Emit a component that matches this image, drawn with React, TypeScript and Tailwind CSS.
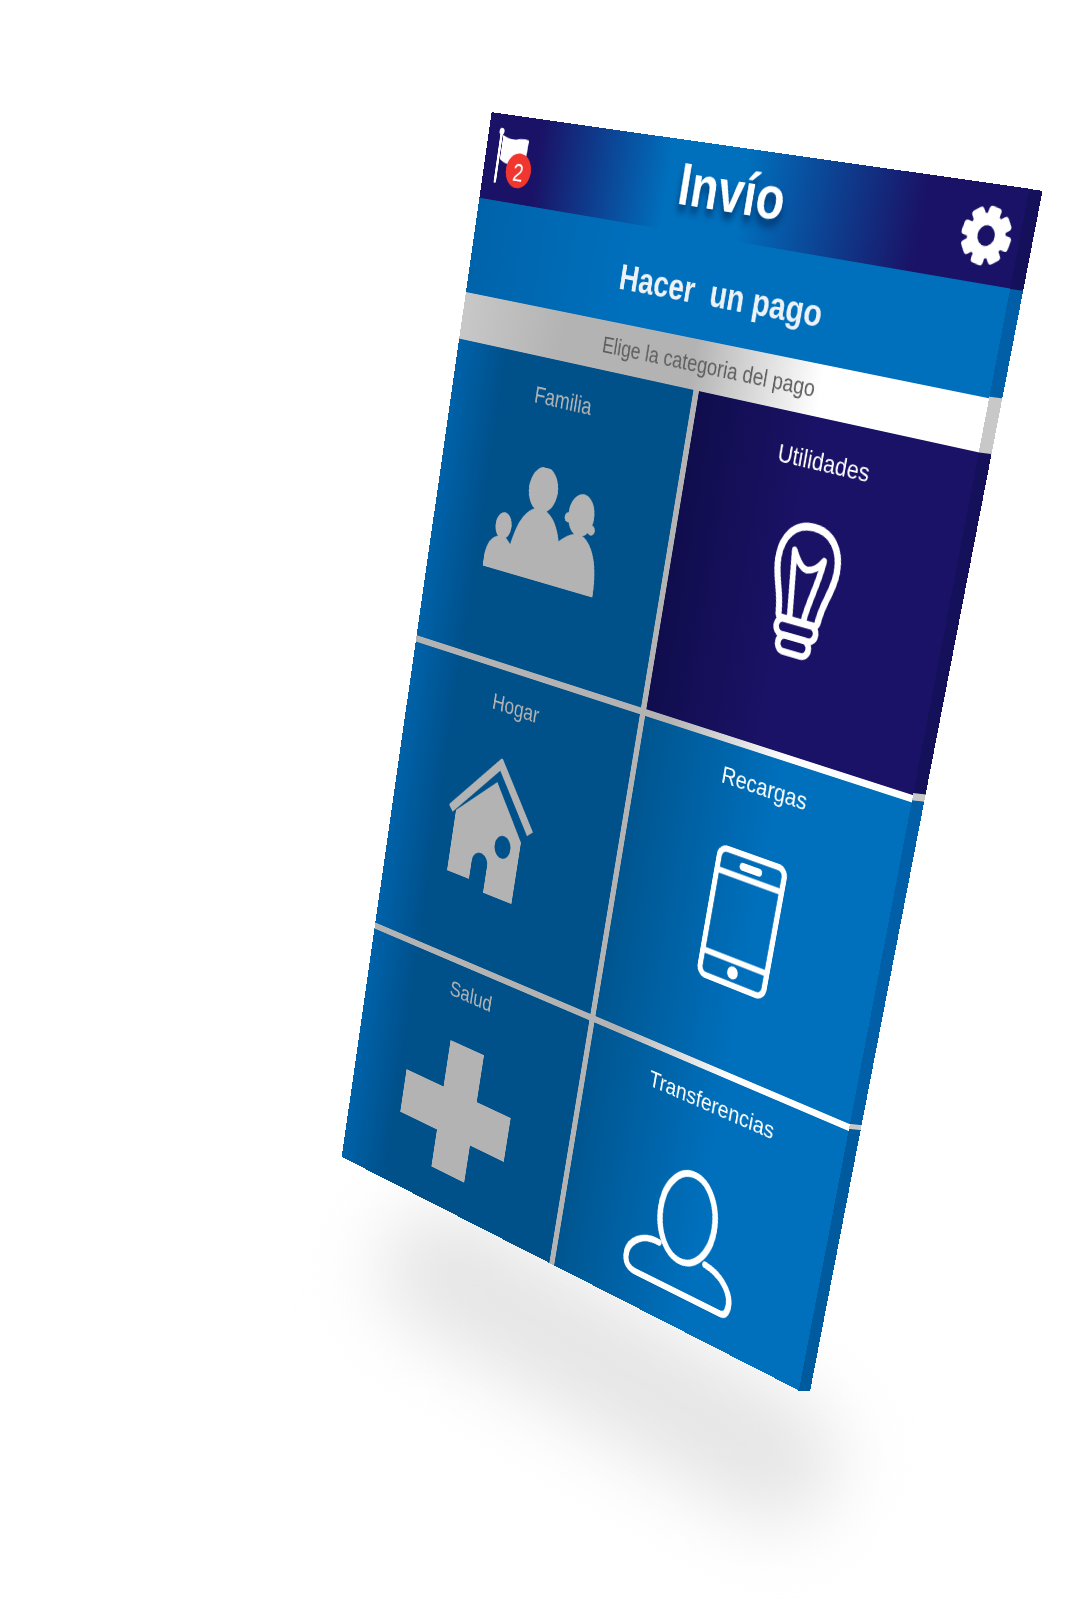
import type { ReactNode } from "react";

type Pt = [number, number];

// maps a w x h box onto four screen corners (tl, tr, br, bl)
function quadMatrix(w: number, h: number, [p0, p1, p2, p3]: Pt[]) {
  const dx1 = p1[0] - p2[0];
  const dy1 = p1[1] - p2[1];
  const dx2 = p3[0] - p2[0];
  const dy2 = p3[1] - p2[1];
  const sx = p0[0] - p1[0] + p2[0] - p3[0];
  const sy = p0[1] - p1[1] + p2[1] - p3[1];
  const det = dx1 * dy2 - dx2 * dy1;
  const g = (sx * dy2 - dx2 * sy) / det;
  const k = (dx1 * sy - sx * dy1) / det;
  const a = p1[0] - p0[0] + g * p1[0];
  const b = p3[0] - p0[0] + k * p3[0];
  const d = p1[1] - p0[1] + g * p1[1];
  const e = p3[1] - p0[1] + k * p3[1];
  return `matrix3d(${a / w},${d / w},0,${g / w},${b / h},${e / h},0,${k / h},0,0,1,0,${p0[0]},${p0[1]},0,1)`;
}

const FACE: Pt[] = [[491.7, 112.2], [1029.3, 188.7], [798.8, 1390.4], [341.7, 1156.8]];
const SIDE: Pt[] = [[1027.8, 188.7], [1042.5, 190.8], [810, 1391.4], [797.3, 1390.4]];

const FONT = "font-['Liberation_Sans',Arial,sans-serif]";

function Cell({ label, className, labelClass, pad, children }: { label: string; className: string; labelClass: string; pad: string; children: ReactNode }) {
  return (
    <div className={`flex flex-col items-center ${pad} ${className}`}>
      <span className={`text-[14px] leading-4 ${labelClass}`}>{label}</span>
      {children}
    </div>
  );
}

function Gear() {
  return (
    <svg viewBox="0 0 32 32" className="absolute left-[339px] top-[10px] h-8 w-8">
      <g fill="#fff">
        <circle cx="16" cy="16" r="11.5" />
        {[0, 45, 90, 135, 180, 225, 270, 315].map((r) => (
          <rect key={r} x="12.2" y="1" width="7.6" height="8" rx="1.8" transform={`rotate(${r + 12} 16 16)`} />
        ))}
      </g>
      <circle cx="16" cy="16" r="5.2" fill="#1a1266" />
    </svg>
  );
}

function FlagIcon() {
  return (
    <div className="absolute left-[7px] top-[6px] h-[36px] w-[32px]">
      <svg viewBox="0 0 32 36" className="h-full w-full">
        <path d="M3.5 4 L3.5 33" stroke="#fff" strokeWidth="2" strokeLinecap="round" />
        <circle cx="3.5" cy="4" r="2" fill="#fff" />
        <path d="M5 6 C10 8 15 8 18 7 C21 6.5 24 6.5 26 7 L25.5 21 C20 21 16 22 12 22 C9 22 7 21 5 20 Z" fill="#fff" />
      </svg>
      <div className="absolute left-[11px] top-[15px] flex h-[20px] w-[20px] items-center justify-center rounded-full bg-[#f0362f] text-[15px] leading-none text-white">
        2
      </div>
    </div>
  );
}

function Family() {
  return (
    <svg viewBox="0 0 89 67" className="ml-[-3px] mt-[33px] h-[67px] w-[89px]" fill="#b3b3b3">
      <ellipse cx="39" cy="13" rx="11.5" ry="13.5" />
      <path d="M19 67 C17 45 25 25 39 24 C52 25 60 38 61 67 Z" />
      <ellipse cx="12" cy="40" rx="6.5" ry="8" />
      <path d="M0 67 L0 61 C0 52 5 47 12 46 C19 47 25 54 26 67 Z" />
      <ellipse cx="71" cy="22" rx="10" ry="12.5" />
      <circle cx="61.5" cy="25" r="3" />
      <circle cx="80" cy="29" r="3" />
      <path d="M54 67 L55 42 C60 37 66 33 72 33 C82 35 89 46 89 67 Z" />
    </svg>
  );
}

function Bulb() {
  return (
    <svg viewBox="0 0 45 75" className="mt-[25px] h-[75px] w-[45px]" fill="none" stroke="#fff" strokeWidth="4.2" strokeLinejoin="round" strokeLinecap="round">
      <path d="M22.5 2.5 C10 2.5 2.5 11 2.5 23 C2.5 34 8 40 9 52 C9 54 10 55 12 55 L33 55 C35 55 36 54 36 52 C37 40 42.5 34 42.5 23 C42.5 11 35 2.5 22.5 2.5 Z" />
      <path d="M17 54 L12.5 17 C15 21 19 26 23 26 C27 25.5 30 23.5 33 19 C32 32 27 44 26.5 54" strokeWidth="3.8" />
      <rect x="9" y="55" width="27" height="9" rx="4.5" strokeWidth="3.8" />
      <rect x="12" y="64" width="21" height="9" rx="4.5" strokeWidth="3.8" />
    </svg>
  );
}

function House() {
  return (
    <svg viewBox="0 0 70 85" className="ml-[-18px] mt-[25px] h-[85px] w-[70px]">
      <path d="M1.5 41 L37 3.5 L68 39" fill="none" stroke="#b3b3b3" strokeWidth="5.5" />
      <path
        fillRule="evenodd"
        fill="#b3b3b3"
        d="M36 15 L62 46 L62 85 L38 85 L38 68 A6.5 6.5 0 0 0 25 68 L25 80 L6 80 L6 41 Z M48 46 A6.5 7 0 1 0 48.01 60 A6.5 7 0 1 0 48 46 Z"
      />
    </svg>
  );
}

function Phone() {
  return (
    <svg viewBox="0 0 50 79" className="ml-[-3px] mt-[31px] h-[79px] w-[50px]" fill="none" stroke="#fff" strokeWidth="3.6">
      <rect x="1.8" y="1.8" width="46.4" height="75.4" rx="5" />
      <path d="M1.8 15 H48.2 M1.8 63 H48.2" />
      <rect x="17" y="6.5" width="16" height="4.5" rx="2.2" fill="#fff" stroke="none" />
      <circle cx="25" cy="70" r="3.8" fill="#fff" stroke="none" />
    </svg>
  );
}

function Cross() {
  return (
    <svg viewBox="0 0 91 85" className="ml-[-3px] mt-[25px] h-[85px] w-[91px]" fill="#b3b3b3">
      <path d="M33 0 H62 V31 H91 V60 H62 V85 H33 V60 H0 V31 H33 Z" />
    </svg>
  );
}

function Person() {
  return (
    <svg viewBox="0 0 82 78" className="ml-[-6px] mt-[34px] h-[78px] w-[82px]" fill="none" stroke="#fff" strokeWidth="4" strokeLinecap="round">
      <ellipse cx="41" cy="30" rx="20" ry="27" />
      <path d="M24 52 C12 51 2 59 2 68 C2 73 5 76 11 76 L75 76 C79 76 80 73 80 69 C80 61 71 53 59 52" />
    </svg>
  );
}

export default function App() {
  return (
    <div className={`relative h-[1600px] w-[1066px] overflow-hidden bg-white ${FONT}`}>
      {/* soft floor shadow */}
      <div className="absolute left-[355px] top-[1300px] h-[130px] w-[510px] rotate-[30deg] rounded-full bg-[#e6e6e6] blur-[36px]" />

      {/* side of the device */}
      <div className="absolute left-0 top-0 flex h-[667px] w-[16px] origin-top-left flex-col" style={{ transform: quadMatrix(16, 667, SIDE) }}>
        <div className="h-[47.5px] bg-[#15105a]" />
        <div className="h-[53.5px] bg-[#005fa6]" />
        <div className="h-[27.5px] bg-[#c8c8c8]" />
        <div className="h-[180.5px] bg-[#15105a]" />
        <div className="h-[4px] bg-[#c8c8c8]" />
        <div className="h-[187px] bg-[#005fa6]" />
        <div className="h-[3px] bg-[#c8c8c8]" />
        <div className="flex-1 bg-[#005a9e]" />
      </div>

      {/* front face */}
      <div className="absolute left-0 top-0 flex h-[667px] w-[375px] origin-top-left flex-col" style={{ transform: quadMatrix(375, 667, FACE) }}>
        <header className="relative flex h-[50px] items-center justify-center bg-[linear-gradient(90deg,#1a1266_11%,#0070bd_38%,#0070bd_52%,#1a1266_84%)]">
          <FlagIcon />
          <h1 className="mt-[-2px] text-[32px] font-bold leading-none text-white [text-shadow:0_4px_4px_rgba(0,20,60,0.55)]">Invío</h1>
          <Gear />
        </header>
        <div className="flex h-[56px] items-center justify-center bg-[linear-gradient(90deg,#0063aa,#0070bd_35%)] pl-[5px] pt-[3px] text-[20px] font-bold whitespace-pre text-[#eef2f6]">
          Hacer  un pago
        </div>
        <div className="flex h-[28px] items-center justify-center bg-[linear-gradient(90deg,#c8c8c8,#b3b3b3_22%,#b3b3b3_48%,#fff_72%)] pl-[4px] text-[13px] text-[#5f5f5f]">
          Elige la categoria del pago
        </div>
        <div className="grid flex-1 grid-cols-[184px_1fr] grid-rows-[184px_184px_1fr] gap-[4px] bg-[linear-gradient(90deg,#b3b3b3_55%,#fff_78%)]">
          <Cell label="Familia" pad="pt-[14px]" labelClass="ml-[-5px] text-[#b3b3b3]" className="bg-[linear-gradient(90deg,#0062a9,#00508a_22%)]">
            <Family />
          </Cell>
          <Cell label="Utilidades" pad="pt-[15px]" labelClass="ml-[-3px] text-white" className="bg-[linear-gradient(90deg,#100d4d,#1a1266_45%)]">
            <Bulb />
          </Cell>
          <Cell label="Hogar" pad="pt-[12px]" labelClass="ml-[-5px] text-[#b3b3b3]" className="bg-[linear-gradient(90deg,#0062a9,#00508a_22%)]">
            <House />
          </Cell>
          <Cell label="Recargas" pad="pt-[10px]" labelClass="ml-[-5px] text-white" className="bg-[linear-gradient(90deg,#00558f,#0070bd_55%)]">
            <Phone />
          </Cell>
          <Cell label="Salud" pad="pt-[8px]" labelClass="ml-[-6px] text-[#b3b3b3]" className="bg-[linear-gradient(90deg,#0062a9,#00508a_22%)]">
            <Cross />
          </Cell>
          <Cell label="Transferencias" pad="pt-[10px]" labelClass="ml-[-1px] text-white" className="bg-[linear-gradient(90deg,#00558f,#0070bd_55%)]">
            <Person />
          </Cell>
        </div>
      </div>
    </div>
  );
}
